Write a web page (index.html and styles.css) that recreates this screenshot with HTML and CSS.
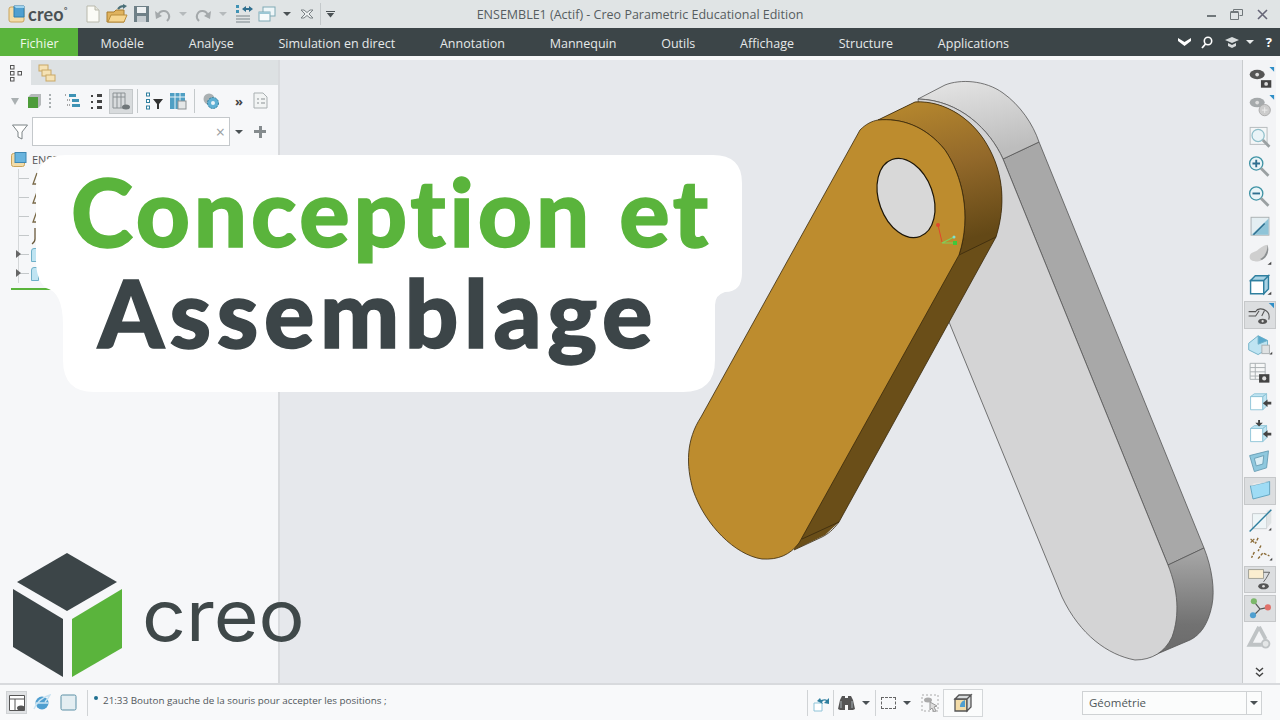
FILE: index.html
```html
<!DOCTYPE html>
<html lang="fr">
<head>
  <meta charset="UTF-8">
  <meta name="viewport" content="width=device-width, initial-scale=1.0">
  <title>Conception et Assemblage - Creo</title>
  <link rel="stylesheet" href="styles.css">
</head>
<body>
  <div class="app">
    <!-- title bar -->
    <div class="titlebar">
      <div class="app-logo">
        <svg width="18" height="18" viewBox="0 0 18 18"><rect x="1" y="2" width="15" height="15" rx="2" fill="#f3dca8" stroke="#c9a45c"/><path d="M6 1h10v11H6z" fill="#4f9fd0" stroke="#2f7fae"/><path d="M6 1l2-0h8v2H8z" fill="#9fd3ef"/></svg>
        <span class="app-logo-text">creo<sup>°</sup></span>
      </div>
      <div class="quick-bar">
        <svg class="qa w18" viewBox="0 0 18 20"><path d="M3 2h8l4 4v12H3z" fill="#fbfbf6" stroke="#b9b9ac"/><path d="M11 2v4h4" fill="#e6e6dc" stroke="#b9b9ac"/></svg>
        <svg class="qa w22" viewBox="0 0 22 20"><path d="M1 8h7l2-2h8v12H1z" fill="#e0b35e" stroke="#a87d2f"/><path d="M2 18l3-7h16l-3 7z" fill="#f6d690" stroke="#b98d3d"/><path d="M12 5c2-3 4-3 6-3" stroke="#4a6f78" stroke-width="2" fill="none"/><path d="M17 0l4 2-4 3z" fill="#4a6f78"/></svg>
        <svg class="qa w18" viewBox="0 0 18 20"><rect x="2" y="2" width="15" height="16" fill="#6f8087"/><rect x="5" y="3" width="9" height="6" fill="#eef1f2"/><rect x="5" y="12" width="9" height="6" fill="#c5ccd0"/></svg>
        <svg class="qa w18" viewBox="0 0 18 20"><path d="M4 12c1-6 9-7 11-1 1 3-1 5-2 6" stroke="#a4a9ab" stroke-width="2" fill="none"/><path d="M1 7l1 8 6-3z" fill="#a4a9ab"/></svg>
        <span class="dd dd-gap dd-light"></span>
        <svg class="qa w18" viewBox="0 0 18 20"><path d="M14 12c-1-6-9-7-11-1-1 3 1 5 2 6" stroke="#a4a9ab" stroke-width="2" fill="none"/><path d="M17 7l-1 8-6-3z" fill="#a4a9ab"/></svg>
        <span class="dd dd-gap dd-light"></span>
        <svg class="qa w20" viewBox="0 0 20 20"><g fill="#3f93b5"><rect x="2" y="1" width="3" height="3"/><rect x="2" y="6" width="3" height="3"/></g><path d="M2 12h14M2 15h14M2 18h14" stroke="#9aa4a8" stroke-width="1.3"/><path d="M8 5l4-3v2h3V2l4 3-4 3V6h-3v2z" fill="#2f6f8f"/></svg>
        <svg class="qa w18" viewBox="0 0 18 20"><rect x="5" y="3" width="12" height="9" fill="#eef6f8" stroke="#7fa9b5"/><rect x="1" y="8" width="11" height="9" fill="#f8fbfb" stroke="#7fa9b5"/><rect x="1" y="8" width="11" height="2" fill="#9cc7d4"/></svg>
        <span class="dd dd-gap"></span>
        <svg class="qa w18" viewBox="0 0 18 20"><path d="M3 6h3l3 2.500L12 6h3l-4 4 4 4h-3l-3-2.500L6 14H3l4-4z" fill="#eceff0" stroke="#7b8285"/></svg>
        <span class="qa-sep"></span>
        <span class="qa-menu"></span>
      </div>
      <div class="window-title">ENSEMBLE1 (Actif) - Creo Parametric Educational Edition</div>
      <div class="window-buttons">
        <span class="win-min"></span>
        <svg width="13" height="11" viewBox="0 0 13 11"><path d="M3.500 2.500V.5h9v6h-3M.5 3.500h8v7h-8z" fill="none" stroke="#70777a"/><path d="M.5 3h8" stroke="#70777a" stroke-width="2"/></svg>
        <svg width="11" height="11" viewBox="0 0 11 11"><path d="M1 1l9 9M10 1l-9 9" stroke="#667" stroke-width="1.600"/></svg>
      </div>
    </div>

    <!-- ribbon -->
    <div class="ribbon">
      <div class="tab tab-file">Fichier</div>
      <div class="tab">Modèle</div>
      <div class="tab">Analyse</div>
      <div class="tab">Simulation en direct</div>
      <div class="tab">Annotation</div>
      <div class="tab">Mannequin</div>
      <div class="tab">Outils</div>
      <div class="tab">Affichage</div>
      <div class="tab">Structure</div>
      <div class="tab">Applications</div>
      <div class="ribbon-tools">
        <svg class="chev" width="13" height="8" viewBox="0 0 13 8"><path d="M0 0l6.500 4L13 0v3l-6.500 5L0 3z" fill="#fff"/></svg>
        <svg width="12" height="13" viewBox="0 0 12 13"><circle cx="7" cy="5" r="3.700" fill="none" stroke="#fff" stroke-width="1.600"/><path d="M4.500 8L1 12" stroke="#fff" stroke-width="1.800"/></svg>
        <svg width="14" height="11" viewBox="0 0 14 11"><path d="M7 0l7 3-7 3-7-3zM3 6l4 2 4-2v3l-4 2-4-2z" fill="#d8dcdd"/></svg>
        <span class="dd dd-white"></span>
        <span class="help">?</span>
      </div>
    </div>
    <div class="ribbon-gap"></div>

    <div class="workspace">
      <!-- model tree panel -->
      <div class="panel">
        <div class="panel-tabs">
          <div class="panel-tab panel-tab-on">
            <svg width="14" height="18" viewBox="0 0 14 18"><g fill="none" stroke="#555"><rect x="1.500" y="1.500" width="3.500" height="3.500"/><rect x="1.500" y="7.500" width="3.500" height="3.500"/><rect x="1.500" y="13.500" width="3.500" height="3.500"/><rect x="9" y="7.500" width="3.500" height="3.500"/></g></svg>
          </div>
          <div class="panel-tab">
            <svg width="18" height="18" viewBox="0 0 18 18"><g fill="#f5e2b5" stroke="#c9a866"><rect x="1" y="1" width="9" height="6"/><rect x="4" y="6" width="9" height="6"/><rect x="8" y="11" width="9" height="6"/></g></svg>
          </div>
        </div>
        <div class="panel-tools">
          <span class="tri-down"></span>
          <svg class="pt-cube" width="14" height="16" viewBox="0 0 14 16"><path d="M0 4h10v11H0z" fill="#4d9c3a"/><path d="M0 4l3-3h10l-3 3zM10 4l3-3v11l-3 3z" fill="#b5b9ba"/></svg>
          <span class="pt-grip"></span>
          <svg class="pt-ic pt-tree" width="20" height="18" viewBox="0 0 20 18"><g fill="#3f93b5"><rect x="6" y="2" width="7" height="3"/><rect x="9" y="7" width="7" height="3"/><rect x="9" y="12" width="8" height="3"/></g><path d="M2 3h2M4 8h3M4 13h3" stroke="#555" stroke-dasharray="1 1"/></svg>
          <svg class="pt-ic" width="16" height="18" viewBox="0 0 16 18"><g fill="#444"><rect x="8" y="2" width="5" height="3"/><rect x="8" y="8" width="5" height="3"/><rect x="8" y="14" width="5" height="3"/><rect x="2" y="3" width="2" height="2"/><rect x="2" y="9" width="2" height="2"/><rect x="2" y="15" width="2" height="2"/></g></svg>
          <span class="pt-active">
            <svg width="18" height="18" viewBox="0 0 18 18"><path d="M1 1h12v15H1zM5 1v15M9 1v15M1 5h12" fill="none" stroke="#8b9194"/><ellipse cx="14" cy="15" rx="4" ry="2.500" fill="#70777a"/></svg>
          </span>
          <span class="pt-sep"></span>
          <svg class="pt-ic" width="18" height="18" viewBox="0 0 18 18"><g fill="#fff" stroke="#2f7f9f"><rect x="1.500" y="1" width="3" height="3"/><rect x="1.500" y="7.500" width="3" height="3"/><rect x="1.500" y="14" width="3" height="3"/></g><path d="M8 7h10l-4 5v5h-2v-5z" fill="#333"/></svg>
          <svg class="pt-ic" width="18" height="18" viewBox="0 0 18 18"><rect x="1" y="1" width="15" height="16" fill="#4f9fc4"/><path d="M6 1v16M11 1v16M1 5h15" stroke="#e8f3f8"/><rect x="9" y="9" width="8" height="8" fill="#e4e7e8" stroke="#8b9194"/></svg>
          <span class="pt-sep pt-sep-b"></span>
          <svg class="pt-ic" width="18" height="18" viewBox="0 0 18 18"><circle cx="7" cy="7" r="5.500" fill="#aab0b2"/><circle cx="11" cy="11" r="5.500" fill="#5fb0d4" stroke="#2f7f9f" stroke-dasharray="2 1"/><circle cx="11" cy="11" r="2" fill="#e8f3f8"/></svg>
          <span class="pt-more">»</span>
          <svg class="pt-ic" width="16" height="18" viewBox="0 0 16 18"><path d="M1 1h9l4 4v11H1z" fill="#f2f4f4" stroke="#a9afb1"/><path d="M4 7h2M8 7h4M4 11h2M8 11h4" stroke="#8b9194"/></svg>
        </div>
        <div class="filter-row">
          <svg width="16" height="16" viewBox="0 0 16 16"><path d="M.5 1h15L10 8v7L6 13V8z" fill="#fff" stroke="#7b8285"/></svg>
          <div class="filter-input"><span class="filter-x">×</span></div>
          <span class="dd"></span>
          <span class="filter-plus"></span>
        </div>
        <ul class="tree">
          <li class="tree-root">
            <svg width="16" height="16" viewBox="0 0 16 16"><rect x="0.500" y="1.500" width="13" height="13" rx="2" fill="#f3dca8" stroke="#c9a45c"/><rect x="4" y="0.500" width="11" height="10" fill="#69b4de" stroke="#3f88b3"/></svg>
            <span>ENSE</span>
          </li>
          <li><svg width="10" height="14" viewBox="0 0 10 14"><path d="M6 1L2 12h7" fill="none" stroke="#7a6a48" stroke-width="1.300"/></svg></li>
          <li><svg width="10" height="14" viewBox="0 0 10 14"><path d="M6 1L2 12h7" fill="none" stroke="#7a6a48" stroke-width="1.300"/></svg></li>
          <li><svg width="10" height="14" viewBox="0 0 10 14"><path d="M6 1L2 12h7" fill="none" stroke="#7a6a48" stroke-width="1.300"/></svg></li>
          <li><svg width="10" height="18" viewBox="0 0 10 18"><path d="M4 1v11q0 3-3 5" fill="none" stroke="#6b5a3c" stroke-width="1.300"/></svg></li>
          <li class="has-kids"><span class="part"></span></li>
          <li class="has-kids"><span class="part"></span></li>
        </ul>
        <div class="insert-line"></div>
      </div>

      <!-- graphics window -->
      <div class="canvas">
        <svg class="model" viewBox="278 60 964 623">
          <defs>
            <linearGradient id="grayTop" x1="0" y1="0" x2="0.300" y2="1"><stop offset="0" stop-color="#e6e6e6"/><stop offset="1" stop-color="#bdbdbd"/></linearGradient>
            <linearGradient id="grayEnd" x1="0" y1="0" x2="0" y2="1"><stop offset="0" stop-color="#a9a9a9"/><stop offset="0.700" stop-color="#727272"/><stop offset="1" stop-color="#6a6a6a"/></linearGradient>
            <linearGradient id="goldTop" x1="0" y1="0" x2="0.200" y2="1"><stop offset="0" stop-color="#b98a2e"/><stop offset="0.500" stop-color="#93692a"/><stop offset="1" stop-color="#634816"/></linearGradient>
          </defs>
          <!-- grey arm -->
          <path d="M1039 142 L1204 548 L1168 565 L1003 159 Z" fill="#a8a8a8" stroke="#555" stroke-width="0.800"/>
          <path d="M918 99 L945 85 C960 79 985 80 1003 93 C1020 105 1033 124 1039 142 L1003 159 C990 130 960 100 918 99 Z" fill="url(#grayTop)" stroke="#555" stroke-width="0.800"/>
          <path d="M1204 548 C1212 568 1215 590 1212 605 C1208 625 1200 635 1190 640 L1150 657 L1168 565 Z" fill="url(#grayEnd)" stroke="#555" stroke-width="0.800"/>
          <path d="M918 99 C960 100 990 130 1003 159 L1168 565 C1178 590 1180 615 1172 637 C1165 652 1152 660 1135 660 C1108 655 1080 635 1062 597 L940 300 Z" fill="#d4d4d5" stroke="#555" stroke-width="0.800"/>
          <!-- gold arm -->
          <path d="M878 120 L915 102 C945 100 975 120 990 150 C1003 175 1006 205 996 237 L839 522 L825 535 L794 550 L800 500 L950 240 Z" fill="#6a4e18"/>
          <path d="M878 120 L915 102 C945 100 975 120 990 150 C1003 175 1006 205 996 237 L959 255 C972 215 962 175 945 150 C925 125 900 118 878 120 Z" fill="url(#goldTop)" stroke="#3a2a0c" stroke-width="0.800"/>
          <path d="M996 237 L839 522 C833 530 828 534 822 537 L794 550" fill="none" stroke="#3a2a0c" stroke-width="0.800"/>
          <path d="M839 522 L802 539" stroke="#3a2a0c" stroke-width="0.800"/>
          <path d="M878 120 C900 118 925 125 945 150 C962 175 972 215 959 255 L799 543 C790 555 778 560 762 559 C735 555 705 525 693 490 C686 465 686 440 701 417 L860 130 C866 124 872 121 878 120 Z" fill="#bd8c2e" stroke="#3a2a0c" stroke-width="0.800"/>
          <ellipse cx="906" cy="198" rx="27" ry="41" transform="rotate(-20 906 198)" fill="#d8d8d8" stroke="#1d1608" stroke-width="1.200"/>
          <!-- triad -->
          <path d="M938 225 L942 242" stroke="#e0482c" stroke-width="1"/>
          <circle cx="938" cy="225" r="2" fill="#e0482c"/>
          <path d="M942 243 L955 243 M942 243 L954 237" stroke="#7fd05a" stroke-width="1.200"/>
          <rect x="953" y="241" width="4" height="4" fill="#3fc83a"/>
          <circle cx="954" cy="237" r="1.500" fill="#7fe0d0"/>
        </svg>

        <div class="brand">
          <svg class="brand-cube" width="110" height="125" viewBox="13 553 110 125">
            <path d="M67 553L117 582 67 611 17 582z" fill="#3c4548"/>
            <path d="M13 589L63 619V677L13 647z" fill="#3c4548"/>
            <path d="M72 619L122 589V648L72 677z" fill="#5ab43c"/>
          </svg>
          <span class="brand-name">creo</span>
        </div>

        <div class="title-card">
          <svg class="title-card-bg" width="706" height="237" viewBox="0 0 706 237"><path d="M30 0H677Q706 0 706 28V118Q706 137 689 137 679 140 679 150V205Q679 237 647 237H58Q27 237 27 205V170Q27 137 10 133 0 125 0 105V30Q0 0 30 0Z" fill="#fff"/></svg>
          <div class="title-line title-green">Conception et</div>
          <div class="title-line title-dark">Assemblage</div>
        </div>
      </div>

      <!-- view toolbar -->
      <div class="view-bar">
        <svg class="vb" viewBox="0 0 34 29"><path d="M27 1h5v5z" fill="#2f8fc7"/><ellipse cx="14" cy="9" rx="8" ry="5" fill="#555"/><circle cx="14" cy="9" r="2" fill="#ddd"/><rect x="18" y="15" width="11" height="8" fill="#444"/><circle cx="23.500" cy="19" r="2" fill="#ddd"/></svg>
        <svg class="vb" viewBox="0 0 34 29"><path d="M27 0h5v5z" fill="#2f8fc7"/><ellipse cx="14" cy="8" rx="8" ry="5" fill="#a5a9ab"/><circle cx="14" cy="8" r="2" fill="#ddd"/><circle cx="22" cy="16" r="6" fill="#ccc" stroke="#aaa"/><path d="M19 16h6M22 13v6" stroke="#eee"/></svg>
        <svg class="vb" viewBox="0 0 34 29"><rect x="6.500" y="2.500" width="18" height="18" fill="#f4f6f7" stroke="#b5babc"/><circle cx="15" cy="11" r="6.500" fill="#eaf4f7" stroke="#8fbfca" stroke-width="1.300"/><path d="M20 16l7 7" stroke="#9aa0a2" stroke-width="3"/></svg>
        <svg class="vb" viewBox="0 0 34 29"><circle cx="13" cy="10" r="7" fill="#eaf4f7" stroke="#3f93a5" stroke-width="1.400"/><path d="M9 10h8M13 6v8" stroke="#2f6f8f" stroke-width="2"/><path d="M18 15l8 8" stroke="#9aa0a2" stroke-width="3"/></svg>
        <svg class="vb" viewBox="0 0 34 29"><circle cx="13" cy="10" r="7" fill="#eaf4f7" stroke="#3f93a5" stroke-width="1.400"/><path d="M9 10h8" stroke="#2f6f8f" stroke-width="2"/><path d="M18 15l8 8" stroke="#9aa0a2" stroke-width="3"/></svg>
        <svg class="vb" viewBox="0 0 34 29"><rect x="7.500" y="4.500" width="19" height="19" fill="#e4eef2" stroke="#a9afb1"/><path d="M8 23L26 6v17z" fill="#8fc4d8"/><path d="M10 23l12-12" stroke="#2f6f8f" stroke-width="1.500"/></svg>
        <svg class="vb" viewBox="0 0 34 29"><path d="M6 16c0-5 5-5 8-7 4-3 8-6 11-6 2 6 0 13-6 16-5 3-13 2-13-3z" fill="#cfcfcf"/><path d="M17 18c5-2 8-8 8-15 2 6 0 13-6 16z" fill="#8b8f91"/><path d="M25 24l4-3v3z" fill="#444"/></svg>
        <svg class="vb" viewBox="0 0 34 29"><path d="M7 9h14v14H7z" fill="#fff" stroke="#2f7f9f" stroke-width="1.500"/><path d="M7 9l5-5h14l-5 5zM21 9l5-5v14l-5 5z" fill="#a9d3e4" stroke="#2f7f9f" stroke-width="1.500"/><path d="M25 24l4-3v3z" fill="#444"/></svg>
        <svg class="vb vb-on" viewBox="0 0 34 29"><path d="M27 1h6v6z" fill="#2f8fc7"/><path d="M4 11h8c2-4 8-4 12-1 3 2 4 6 3 10M4 16h8l4-6M22 10l-3 6" fill="none" stroke="#555" stroke-width="1.200"/><ellipse cx="20" cy="22" rx="5" ry="3" fill="#555"/><circle cx="20" cy="22" r="1.300" fill="#ddd"/></svg>
        <svg class="vb" viewBox="0 0 34 29"><path d="M5 13l10-8 10 5v9l-10 6-10-5z" fill="#bfe4f2" stroke="#6fb0c8"/><path d="M15 5v9l10-4" fill="#5aa9cc" stroke="#6fb0c8"/><rect x="19" y="15" width="8" height="9" fill="#dfe2e3" stroke="#a9afb1"/><path d="M27 25l3-3v3z" fill="#444"/></svg>
        <svg class="vb" viewBox="0 0 34 29"><path d="M6.500 3.500h16v17h-16zM6.500 8h16M6.500 12.500h16M6.500 17h16M12 3.500v17" fill="#f6f7f7" stroke="#a9afb1"/><rect x="16" y="15" width="11" height="9" fill="#444"/><circle cx="21.500" cy="19.500" r="2.200" fill="#ddd"/></svg>
        <svg class="vb" viewBox="0 0 34 29"><path d="M7 8h13v14H7z" fill="#fff" stroke="#8fc4d8"/><path d="M7 8l4-3h13l-4 3zM20 8l4-3v13l-4 4z" fill="#bfe4f2" stroke="#8fc4d8"/><path d="M20 15l5-4v2.500h4v3h-4V19z" fill="#444"/></svg>
        <svg class="vb" viewBox="0 0 34 29"><path d="M7 10h13v14H7z" fill="#fff" stroke="#8fc4d8"/><path d="M7 10l4-3h13l-4 3zM20 10l4-3v13l-4 4z" fill="#bfe4f2" stroke="#8fc4d8"/><path d="M20 16l5-4v2.500h4v3h-4V20zM12 4h3V1h2v3h3l-4 4z" fill="#444"/></svg>
        <svg class="vb" viewBox="0 0 34 29"><path d="M6 8l20-5-2 18-13 4z" fill="#8fc8de" stroke="#6a9fb5"/><path d="M11 11l10-3-1 9-7 2z" fill="#dbeef5" stroke="#6a9fb5"/></svg>
        <svg class="vb vb-on" viewBox="0 0 34 29"><path d="M6 9l22-5v15L9 24z" fill="#9fdcf5" stroke="#5a9fbb"/><path d="M6 9l4-3 18-2z" fill="#e8e8e8"/></svg>
        <svg class="vb" viewBox="0 0 34 29"><path d="M9 7h15v16H9z" fill="#eef5f7" stroke="#c5cbcd"/><path d="M24 4l5-2v15l-5 6z" fill="#e0e4e5"/><path d="M6 26L29 3" stroke="#2f7f9f" stroke-width="1.500"/><path d="M26 25l3-3v3z" fill="#444"/></svg>
        <svg class="vb" viewBox="0 0 34 29"><path d="M7 3l4 4M11 3l-4 4" stroke="#8a6a35" stroke-width="1.300"/><path d="M15 2l-3 6M18 10l-3 6M11 17l-3 6M15 24l5-6 7 3" fill="none" stroke="#8a6a35" stroke-width="1.500" stroke-dasharray="3 1.500"/><path d="M27 26l3-3v3z" fill="#444"/></svg>
        <svg class="vb vb-on" viewBox="0 0 34 29"><rect x="4" y="3" width="17" height="10" fill="#fbeed0" stroke="#9a9a90"/><path d="M21 6h7l-4 7-3 4" fill="none" stroke="#555"/><ellipse cx="21" cy="22" rx="6" ry="3.500" fill="#555"/><circle cx="21" cy="22" r="1.500" fill="#ddd"/></svg>
        <svg class="vb vb-on" viewBox="0 0 34 29"><path d="M10 6l7 9 9-2M17 15l-7 7" stroke="#555" stroke-width="1.400" fill="none"/><circle cx="10" cy="6" r="3.500" fill="#7cb86a"/><circle cx="26" cy="13" r="3.500" fill="#e0716a"/><circle cx="9" cy="22" r="3.500" fill="#4f9fd0"/></svg>
        <svg class="vb" viewBox="0 0 34 29"><path d="M16 3L6 22h13" fill="none" stroke="#bfc3c5" stroke-width="4"/><path d="M16 3l7 13" stroke="#bfc3c5" stroke-width="4"/><circle cx="23" cy="21" r="4" fill="#e4e6e7" stroke="#bfc3c5" stroke-width="2"/></svg>
        <div class="view-more"><svg width="9" height="10" viewBox="0 0 9 10"><path d="M1 1l3.500 3L8 1M1 6l3.500 3L8 6" fill="none" stroke="#444" stroke-width="1.500"/></svg></div>
      </div>
      <div class="edge-strip"></div>
    </div>

    <!-- status bar -->
    <div class="statusbar">
      <span class="st-active"><svg width="18" height="18" viewBox="0 0 18 18"><path d="M1.500 1.500h15v15h-15zM1.500 5h15M7 5v11.500" fill="#fff" stroke="#555"/><ellipse cx="13" cy="14" rx="4" ry="2.500" fill="#555"/></svg></span>
      <svg class="st-ie" width="18" height="18" viewBox="0 0 18 18"><circle cx="9" cy="9" r="6.500" fill="#4f9fd0"/><path d="M1 15C4 8 10 3 17 1c-1 2-2 4-5 7M3 9h12" fill="none" stroke="#c9e3f2" stroke-width="1.400"/></svg>
      <svg class="st-box" width="17" height="17" viewBox="0 0 17 17"><rect x="1" y="1" width="15" height="15" rx="1.500" fill="#e4eef2" stroke="#5a8fa5"/></svg>
      <span class="st-sep"></span>
      <div class="message"><span class="msg-dot"></span><span>21:33 Bouton gauche de la souris pour accepter les positions ;</span></div>
      <span class="st-sep st-sep-a"></span>
      <svg class="st-ic st-spin" width="20" height="20" viewBox="0 0 20 20"><path d="M3 10h8v8H3z" fill="#fff" stroke="#8fc4d8"/><path d="M6 8l3-3 1 2c3-1 5-1 6 0l2-2v6l-5-1 2-2c-2-1-3 0-4 1l1 2z" fill="#2f7f9f"/></svg>
      <span class="st-sep st-sep-b"></span>
      <svg class="st-ic" width="17" height="18" viewBox="0 0 17 18"><path d="M2 6l2-4h3v2h3V2h3l2 4 2 9-2 1H10v-5H7v5H2l-2-1z" fill="#555"/><path d="M3 7v7M14 7v7" stroke="#8b9194" stroke-width="1.500"/></svg>
      <span class="dd"></span>
      <span class="st-sep st-sep-c"></span>
      <span class="dash-box"></span>
      <span class="dd"></span>
      <svg class="st-ic st-pick" width="18" height="18" viewBox="0 0 18 18"><rect x="1" y="1" width="16" height="16" fill="none" stroke="#aaa" stroke-dasharray="2 2"/><ellipse cx="7" cy="6" rx="4" ry="2.500" fill="#aaa"/><path d="M9 8l7 4-3 1 2 4-2 1-2-4-2 2z" fill="#ddd" stroke="#999"/></svg>
      <span class="st-cube"><svg width="20" height="20" viewBox="0 0 20 20"><path d="M2 6h12v12H2z" fill="#f3dca8" stroke="#555" stroke-width="1.300"/><path d="M2 6l4-4h12l-4 4zM14 6l4-4v12l-4 4z" fill="#d8dcdd" stroke="#555" stroke-width="1.300"/><path d="M7 14c0-4 2-6 5-7v7z" fill="#4f9fd0"/></svg></span>
      <div class="select-box"><span class="select-value">Géométrie</span><span class="select-arrow"><span class="dd"></span></span></div>
    </div>
  </div>
</body>
</html>
```

FILE: styles.css
```css
* { box-sizing: border-box; }
html, body { margin: 0; padding: 0; }
body { font-family: "Open Sans", "Noto Sans", Arial, sans-serif; background: #e6e8ec; color: #444; overflow: hidden; }
svg { display: block; flex-shrink: 0; }
.app { width: 1280px; height: 720px; display: flex; flex-direction: column; overflow: hidden; }

/* small dropdown arrows used everywhere */
.dd { display: block; width: 0; height: 0; flex-shrink: 0; border-left: 4px solid transparent; border-right: 4px solid transparent; border-top: 4px solid #4a5154; }
.dd-gap { margin: 0 3px; }
.dd-light { border-top-color: #b5babc; }
.dd-white { border-top-color: #e8ebec; margin-left: -5px; }

/* title bar */
.titlebar { height: 28px; background: #e0e4e5; display: flex; align-items: center; position: relative; }
.app-logo { display: flex; align-items: center; width: 84px; padding-left: 8px; }
.app-logo-text { font-family: "Lato", sans-serif; font-size: 18px; font-weight: 700; color: #4a5154; line-height: 18px; margin-left: 2px; letter-spacing: 0.2px; }
.app-logo-text sup { font-size: 8px; vertical-align: top; line-height: 10px; }
.quick-bar { display: flex; align-items: center; gap: 4px; }
.qa { height: 20px; }
.w18 { width: 18px; }
.w20 { width: 20px; }
.w22 { width: 22px; }
.qa-sep { width: 1px; height: 22px; background: #c4c9cb; }
.qa-menu { width: 9px; height: 7px; margin-left: 1px; border-top: 1px solid #4a5154; background: linear-gradient(to bottom, transparent 1px, #4a5154 1px); clip-path: polygon(0 0, 100% 0, 100% 20%, 50% 100%, 0 20%); }
.window-title { position: absolute; left: 0; right: 0; top: 6px; text-align: center; font-size: 12.5px; line-height: 18px; color: #565d60; }
.window-buttons { margin-left: auto; display: flex; align-items: center; gap: 14px; padding-right: 12px; }
.win-min { width: 9px; height: 2px; background: #70777a; margin-top: 4px; }

/* ribbon */
.ribbon { height: 28px; background: #3c4548; display: flex; align-items: center; color: #e6e9ea; font-size: 12.5px; }
.tab { padding: 2px 22.4px 0; height: 28px; line-height: 28px; white-space: nowrap; }
.tab-file { width: 78px; padding: 2px 0 0 20px; background: #5ab43c; color: #eef8ea; }
.ribbon-tools { margin-left: auto; display: flex; align-items: center; padding-right: 8px; gap: 12px; }
.chev { margin-right: -2px; }
.help { color: #fff; font-weight: 700; font-size: 13px; line-height: 16px; }
.ribbon-gap { height: 4px; background: #f6f7f8; }

.workspace { height: 623px; display: flex; position: relative; }

/* model tree panel */
.panel { width: 280px; background: #f6f7f9; border-right: 2px solid #d8dadd; display: flex; flex-direction: column; }
.panel-tabs { height: 25px; display: flex; background: #dde1e3; }
.panel-tab { width: 31px; display: flex; align-items: center; justify-content: center; }
.panel-tab-on { background: #f6f7f9; }
.panel-tools { height: 26px; margin-top: 3px; display: flex; align-items: center; padding-left: 11px; }
.tri-down { width: 0; height: 0; border-left: 4px solid transparent; border-right: 4px solid transparent; border-top: 7px solid #aab0b2; }
.pt-cube { margin-left: 9px; }
.pt-grip { width: 2px; height: 14px; margin-left: 7px; border-left: 2px dotted #a9afb1; }
.pt-ic { margin-left: 6px; }
.pt-ic.pt-tree { margin-left: 12px; }
.pt-active { width: 24px; height: 25px; margin-left: 4px; background: #d8dbdd; border: 1px solid #c4c8ca; display: flex; align-items: center; justify-content: center; }
.pt-sep { width: 1px; height: 24px; background: #c4c9cb; margin-left: 4px; margin-right: 1px; }
.pt-sep-b { margin-left: 7px; }
.pt-more { margin: 0 4px 0 15px; font-size: 13px; font-weight: 700; line-height: 16px; color: #444; }
.filter-row { height: 29px; margin-top: 3px; display: flex; align-items: center; padding-left: 12px; }
.filter-input { width: 198px; height: 29px; margin-left: 4px; margin-right: 5px; background: #fff; border: 1px solid #c4c8cb; display: flex; align-items: center; justify-content: flex-end; padding-right: 4px; }
.filter-x { color: #9aa0a3; font-size: 16px; line-height: 16px; }
.filter-plus { width: 12px; height: 12px; margin-left: 11px; background: linear-gradient(#858b8e, #858b8e) center / 12px 3px no-repeat, linear-gradient(#858b8e, #858b8e) center / 3px 12px no-repeat; }
.tree { list-style: none; margin: 4px 0 0; padding: 0 0 0 18px; }
.tree li { height: 19px; display: flex; align-items: center; padding-left: 12px; font-size: 11px; color: #555; white-space: nowrap; border-left: 1px solid #d4d7d9; background: linear-gradient(#c4c8ca, #c4c8ca) 0 center / 10px 1px no-repeat; }
.tree .tree-root { padding-left: 0; margin-left: -7px; gap: 5px; background: none; border-left: 0; }
.part { width: 8px; height: 14px; background: #bfe4f2; border: 1px solid #6fb0c8; border-radius: 3px 3px 0 0; }
.has-kids { position: relative; }
.has-kids:before { content: ""; position: absolute; left: -3px; top: 5px; border-left: 5px solid #666; border-top: 4px solid transparent; border-bottom: 4px solid transparent; }
.insert-line { height: 2px; width: 40px; margin: 5px 0 0 11px; background: #5ab43c; }

/* graphics window */
.canvas { width: 962px; position: relative; background: #e6e8ec; }
.model { position: absolute; left: -2px; top: 0; width: 964px; height: 623px; }

/* view toolbar */
.view-bar { width: 34px; padding-top: 5px; background: #f3f4f6; border-left: 1px solid #c9ccce; display: flex; flex-direction: column; align-items: center; }
.vb { width: 32px; height: 27.4px; margin: 1px 0; flex-shrink: 0; }
.vb-on { background: #dcdee0; border: 1px solid #c6c8ca; }
.view-more { margin-top: 14px; }
.edge-strip { width: 4px; background: #fafbfb; }

/* title and logo laid over the screen */
.title-card { position: absolute; left: -244px; top: 95px; width: 706px; height: 237px; font-family: "Lato", sans-serif; font-weight: 900; font-size: 94px; line-height: 101px; -webkit-text-stroke: 1.5px currentColor; }
.title-card-bg { position: absolute; left: 0; top: 0; }
.title-line { position: relative; white-space: nowrap; }
.title-green { color: #5ab43c; letter-spacing: 3.8px; padding-left: 35px; padding-top: 5px; }
.title-dark { color: #3c4548; letter-spacing: 5.6px; padding-left: 62px; }
.brand { position: absolute; left: -267px; top: 493px; display: flex; align-items: center; gap: 19px; }
.brand-name { font-family: "Inter", sans-serif; font-weight: 400; font-size: 70px; line-height: 90px; color: #3f4849; transform: scaleX(1.1); transform-origin: left center; }

/* status bar */
.statusbar { height: 37px; background: #f8f9fa; border-top: 2px solid #d8dadd; display: flex; align-items: center; padding-left: 6px; }
.st-active { width: 21px; height: 23px; background: #e0e2e4; border: 1px solid #cfd2d4; display: flex; align-items: center; justify-content: center; }
.st-ie { margin-left: 6px; }
.st-box { margin-left: 9px; }
.st-sep { width: 1px; height: 26px; background: #d0d3d5; margin-left: 10px; }
.message { width: 719px; padding-left: 6px; margin-top: -6px; display: flex; align-items: center; gap: 5px; font-size: 9.85px; color: #50575a; white-space: nowrap; }
.msg-dot { width: 4px; height: 4px; border-radius: 50%; background: #1f6f8f; margin-bottom: 3px; }
.st-sep-a { margin-left: 0; }
.st-sep-b { margin-left: 2px; }
.st-sep-c { margin-left: 5px; }
.st-ic { margin-left: 4px; }
.st-spin { margin-left: 3px; }
.statusbar .dd { margin-left: 7px; }
.dash-box { width: 15px; height: 12px; margin-left: 5px; border: 1px dashed #666; }
.statusbar .st-pick { margin-left: 10px; }
.st-cube { width: 40px; height: 28px; margin-left: 4px; border: 1px solid #d4d7d9; background: #fbfcfc; display: flex; align-items: center; justify-content: center; }
.select-box { width: 180px; height: 24px; margin-left: 99px; background: #fbfcfc; border: 1px solid #cfd2d4; display: flex; align-items: center; font-size: 11.5px; color: #50575a; }
.select-value { flex: 1; padding-left: 6px; }
.select-arrow { width: 15px; height: 100%; border-left: 1px solid #cfd2d4; display: flex; align-items: center; justify-content: center; }
.statusbar .select-arrow .dd { margin: 0; }
```
